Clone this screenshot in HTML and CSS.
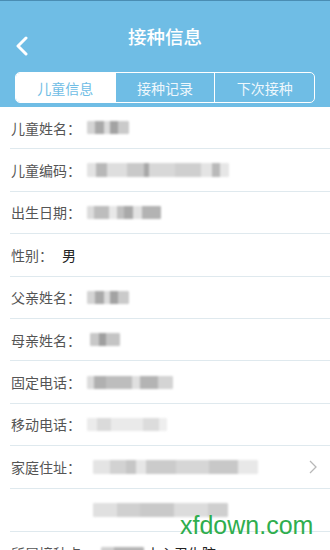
FILE: index.html
```html
<!DOCTYPE html>
<html lang="zh">
<head>
<meta charset="utf-8">
<link rel="stylesheet" href="styles.css">
</head>
<body>
<div class="page">
  <header class="header">
    <div class="topbar">
      <svg class="back" width="14" height="20" viewBox="0 0 14 20"><path d="M11 2 L3 10 L11 18" fill="none" stroke="#fff" stroke-width="3" stroke-linecap="round" stroke-linejoin="round"/></svg>
      <h1 class="title">接种信息</h1>
    </div>
    <div class="tabs">
      <div class="tab active">儿童信息</div>
      <div class="tab">接种记录</div>
      <div class="tab">下次接种</div>
    </div>
  </header>
  <main class="list">
    <div class="row"><span class="label">儿童姓名：</span><span class="blur b-name"></span></div>
    <div class="row"><span class="label">儿童编码：</span><span class="blur b-code"></span></div>
    <div class="row"><span class="label">出生日期：</span><span class="blur b-date"></span></div>
    <div class="row"><span class="label short">性别：</span><span class="value">男</span></div>
    <div class="row"><span class="label">父亲姓名：</span><span class="blur b-name"></span></div>
    <div class="row"><span class="label">母亲姓名：</span><span class="blur b-mother"></span></div>
    <div class="row"><span class="label">固定电话：</span><span class="blur b-phone"></span></div>
    <div class="row"><span class="label">移动电话：</span><span class="blur b-mobile"></span></div>
    <div class="address">
      <div class="addr-line first"><span class="label">家庭住址：</span><span class="blur b-addr1"></span>
        <svg class="chev" width="8" height="14" viewBox="0 0 8 14"><path d="M1 1 L7 7 L1 13" fill="none" stroke="#b8b8b8" stroke-width="1.3"/></svg>
      </div>
      <div class="addr-line second"><span class="blur b-addr2"></span></div>
    </div>
    <div class="row last"><span class="label long">所属接种点：</span><span class="blur b-site"></span><span class="value">中心卫生院</span></div>
  </main>
  <div class="watermark">xfdown.com</div>
</div>
</body>
</html>
```
FILE: styles.css
```css
* { box-sizing: border-box; margin: 0; padding: 0; }
html, body { width: 330px; height: 550px; overflow: hidden; background: #fff; }
body { font-family: "Noto Sans CJK SC", "Noto Sans", sans-serif; }
.page { position: relative; width: 330px; height: 550px; overflow: hidden; }
.header {
  background: #6fbde5;
  border-top: 1px solid #4a8db3;
  height: 107px;
  padding: 0 15px;
  display: flex;
  flex-direction: column;
}
.topbar {
  height: 70px;
  display: flex;
  align-items: center;
  justify-content: center;
  position: relative;
  padding: 16px 0;
}
.back { position: absolute; left: 0; top: 35px; }
.title { color: #fff; font-size: 18.5px; font-weight: 500; line-height: 1; }
.tabs {
  display: flex;
  height: 31px;
  border: 1.5px solid #fff;
  border-radius: 5px;
  overflow: hidden;
  margin-top: 1px;
}
.tab {
  flex: 1;
  display: flex;
  align-items: center;
  justify-content: center;
  color: #eef7fc;
  font-size: 14px;
  border-left: 1.5px solid #fff;
}
.tab:first-child { border-left: none; }
.tab.active { background: #fff; color: #6fbde5; }
.list { display: flex; flex-direction: column; }
.row, .addr-line {
  height: 42.4px;
  display: flex;
  align-items: center;
  border-bottom: 1px solid #dfe9ee;
  margin-left: 10px;
  padding-left: 1px;
  flex-shrink: 0;
}
.label { color: #555; font-size: 14px; width: 76px; flex-shrink: 0; white-space: nowrap; }
.label.short { width: 51px; }
.label.long { width: auto; }
.value { color: #222; font-size: 14px; white-space: nowrap; }
.row.last { border-bottom: none; }
.blur {
  display: block;
  height: 13px;
  filter: blur(0.9px);
  border-radius: 1px;
  flex-shrink: 0;
}
.b-name { width: 42px; background: linear-gradient(90deg, #d4d4d4 0 20%, #a9a9a9 20% 40%, #dcdcdc 40% 55%, #a3a3a3 55% 75%, #cacaca 75% 100%); }
.b-code { width: 142px; height: 14px; background: linear-gradient(90deg, #e3e3e3 0 6%, #b8b8b8 6% 14%, #dedede 14% 28%, #c9c9c9 28% 40%, #a8a8a8 40% 44%, #d8d8d8 44% 62%, #cfcfcf 62% 80%, #e4e4e4 80% 88%, #b9b9b9 88% 94%, #e6e6e6 94% 100%); }
.b-date { width: 74px; background: linear-gradient(90deg, #dcdcdc 0 10%, #bdbdbd 10% 30%, #e8e8e8 30% 40%, #c0c0c0 40% 50%, #a9a9a9 50% 62%, #e2e2e2 62% 75%, #b3b3b3 75% 100%); }
.b-mother { width: 30px; margin-left: 3px; background: linear-gradient(90deg, #c8c8c8 0 30%, #9f9f9f 30% 55%, #c4c4c4 55% 100%); }
.b-phone { width: 86px; background: linear-gradient(90deg, #dcdcdc 0 8%, #b0b0b0 8% 22%, #bdbdbd 22% 52%, #e0e0e0 52% 62%, #b4b4b4 62% 82%, #d4d4d4 82% 100%); }
.b-mobile { width: 80px; background: linear-gradient(90deg, #ebebeb 0 12%, #dadada 12% 30%, #eaeaea 30% 70%, #dcdcdc 70% 90%, #eeeeee 90% 100%); }
.address { display: flex; flex-direction: column; border-bottom: 1px solid #dfe9ee; margin-left: 10px; }
.address .addr-line { margin-left: 0; }
.addr-line.first { position: relative; }
.addr-line.first .label { width: 82px; }
.addr-line.second { margin-left: 67px; padding-left: 16px; border-bottom: none; }
.b-addr1 { width: 165px; height: 14px; background: linear-gradient(90deg, #e4e4e4 0 10%, #d2d2d2 10% 20%, #c6c6c6 20% 26%, #e6e6e6 26% 32%, #cbcbcb 32% 50%, #d6d6d6 50% 70%, #c8c8c8 70% 88%, #e8e8e8 88% 100%); }
.b-addr2 { width: 135px; height: 14px; background: linear-gradient(90deg, #e0e0e0 0 18%, #d0d0d0 18% 35%, #c9c9c9 35% 60%, #dcdcdc 60% 85%, #cfcfcf 85% 100%); }
.chev { position: absolute; right: 13px; top: 14px; }
.b-site { width: 43px; margin-left: 6px; margin-right: 2px; background: linear-gradient(90deg, #d0d0d0 0 30%, #b5b5b5 30% 100%); }
.watermark {
  position: absolute;
  left: 180px;
  top: 510px;
  font-family: "Liberation Sans", Arial, sans-serif;
  font-size: 25px;
  color: #2fae4e;
  line-height: 30px;
}
```
